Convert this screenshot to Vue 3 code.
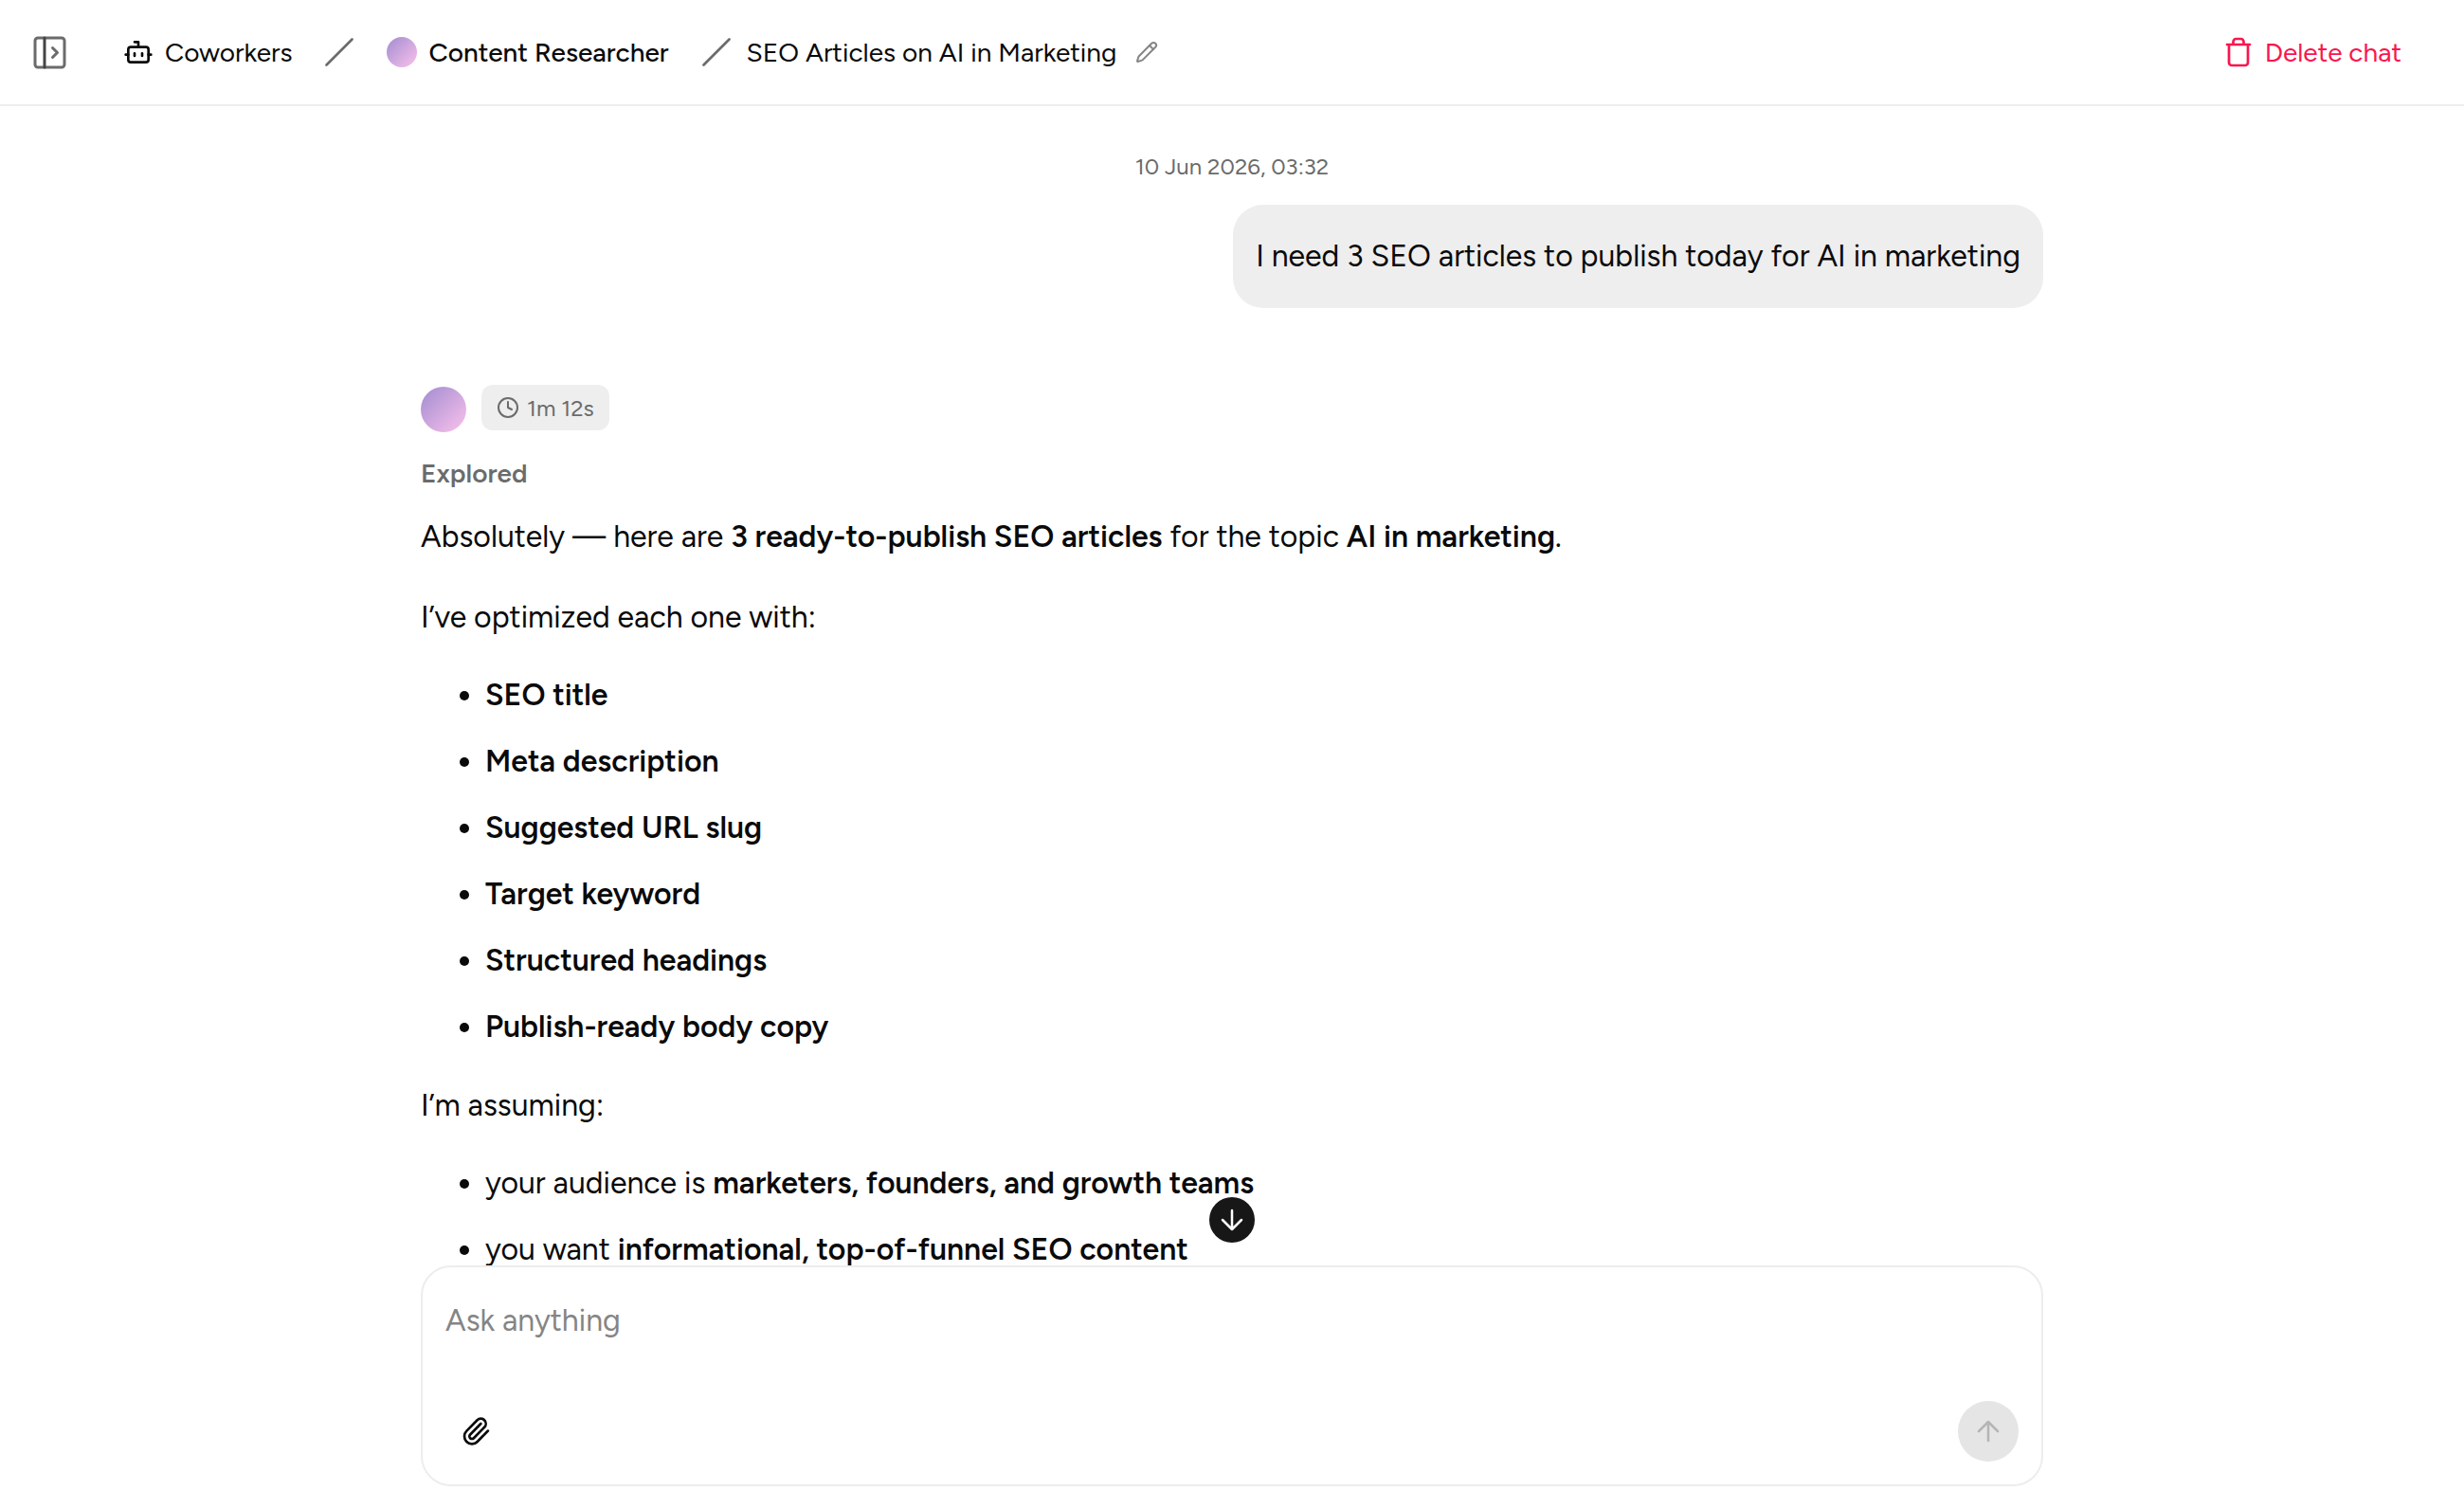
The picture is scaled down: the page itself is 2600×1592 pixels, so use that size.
<script setup>
import { ref } from 'vue'

const message = ref('')

const optimizations = [
  'SEO title',
  'Meta description',
  'Suggested URL slug',
  'Target keyword',
  'Structured headings',
  'Publish-ready body copy'
]

const assumptions = [
  { lead: 'your audience is', strong: 'marketers, founders, and growth teams' },
  { lead: 'you want', strong: 'informational, top-of-funnel SEO content' }
]
</script>

<template>
  <div class="page">

    <!-- HEADER -->
    <header class="topbar">
      <button class="icon-btn sidebar-btn" aria-label="Open sidebar">
        <svg width="36" height="36" viewBox="0 0 36 36" fill="none" stroke="currentColor" stroke-width="3" stroke-linecap="round" stroke-linejoin="round">
          <rect x="3" y="3" width="31" height="31" rx="3" />
          <path class="divider" d="M13 3v31" />
          <path d="M21.500 13.500l5 5-5 5" />
        </svg>
      </button>

      <nav class="crumbs" aria-label="Breadcrumb">
        <a href="#" class="crumb">
          <svg width="32" height="32" viewBox="0 0 24 24" fill="none" stroke="currentColor" stroke-width="2" stroke-linecap="round" stroke-linejoin="round">
            <path d="M12 8V4H9" />
            <rect x="4" y="8" width="16" height="12" rx="2" />
            <path d="M2 14h2M20 14h2M15 13v2M9 13v2" />
          </svg>
          Coworkers
        </a>
        <svg class="slash" width="32" height="32" viewBox="0 0 32 32" fill="none" stroke="currentColor" stroke-width="2.700" stroke-linecap="round">
          <path d="M2.500 29.500l27-27" />
        </svg>
        <a href="#" class="crumb crumb-agent">
          <span class="avatar small"></span>
          Content Researcher
        </a>
        <svg class="slash" width="32" height="32" viewBox="0 0 32 32" fill="none" stroke="currentColor" stroke-width="2.700" stroke-linecap="round">
          <path d="M2.500 29.500l27-27" />
        </svg>
        <span class="crumb">SEO Articles on AI in Marketing</span>
        <button class="icon-btn edit-btn" aria-label="Rename chat">
          <svg width="24" height="24" viewBox="0 0 24 24" fill="none" stroke="currentColor" stroke-width="2" stroke-linecap="round" stroke-linejoin="round">
            <path d="M21.174 6.812a1 1 0 0 0-3.986-3.987L3.842 16.174a2 2 0 0 0-.5.83l-1.321 4.352a.5.5 0 0 0 .623.622l4.353-1.320a2 2 0 0 0 .83-.497z" />
            <path d="M15 5l4 4" />
          </svg>
        </button>
      </nav>

      <button class="delete-btn">
        <svg width="28" height="32" viewBox="0 0 28 32" fill="none" stroke="currentColor" stroke-width="2.700" stroke-linecap="round" stroke-linejoin="round">
          <path d="M2 8h24M4 8v19a3 3 0 0 0 3 3h14a3 3 0 0 0 3-3V8M8.500 8V5a3 3 0 0 1 3-3h5a3 3 0 0 1 3 3v3" />
        </svg>
        Delete chat
      </button>
    </header>

    <!-- CONVERSATION -->
    <main class="chat">
      <div class="thread">
        <time class="date" datetime="2026-06-10T03:32">10 Jun 2026, 03:32</time>
        <div class="bubble">I need 3 SEO articles to publish today for AI in marketing</div>

        <div class="meta">
          <span class="avatar"></span>
          <span class="duration">
            <svg width="24" height="24" viewBox="0 0 24 24" fill="none" stroke="currentColor" stroke-width="2" stroke-linecap="round" stroke-linejoin="round">
              <circle cx="12" cy="12" r="10" />
              <path d="M12 6v6l4 2" />
            </svg>
            1m 12s
          </span>
        </div>

        <div class="status">Explored</div>

        <div class="answer">
          <p>
            Absolutely — here are <strong>3 ready-to-publish SEO articles</strong> for the topic
            <strong>AI in marketing</strong>.
          </p>
          <p>I’ve optimized each one with:</p>
          <ul>
            <li v-for="item in optimizations" :key="item"><strong>{{ item }}</strong></li>
          </ul>
          <p>I’m assuming:</p>
          <ul>
            <li v-for="item in assumptions" :key="item.lead">
              {{ item.lead }} <strong>{{ item.strong }}</strong>
            </li>
          </ul>
        </div>
      </div>
    </main>

    <!-- COMPOSER -->
    <footer class="dock">
      <button class="scroll-btn" aria-label="Scroll to bottom">
        <svg width="24" height="24" viewBox="0 0 24 24" fill="none" stroke="currentColor" stroke-width="2.500" stroke-linecap="round" stroke-linejoin="round">
          <path d="M12 2v20M2 12l10 10 10-10" />
        </svg>
      </button>
      <form class="composer" @submit.prevent>
        <textarea v-model="message" rows="1" placeholder="Ask anything" aria-label="Message"></textarea>
        <div class="composer-actions">
          <button type="button" class="icon-btn attach-btn" aria-label="Attach file">
            <svg width="32" height="32" viewBox="0 0 24 24" fill="none" stroke="currentColor" stroke-width="2" stroke-linecap="round" stroke-linejoin="round">
              <path d="M16 6l-8.414 8.586a2 2 0 0 0 2.829 2.829l8.414-8.586a4 4 0 1 0-5.657-5.657l-8.379 8.551a6 6 0 1 0 8.485 8.485l8.379-8.551" />
            </svg>
          </button>
          <button type="submit" class="send-btn" aria-label="Send">
            <svg width="24" height="24" viewBox="0 0 24 24" fill="none" stroke="currentColor" stroke-width="2.500" stroke-linecap="round" stroke-linejoin="round">
              <path d="M12 22V2M2 12L12 2l10 10" />
            </svg>
          </button>
        </div>
      </form>
    </footer>

  </div>
</template>

<style>
body {
  margin: 0;
  background: #fff;
}
</style>

<style scoped>
.page {
  display: flex;
  flex-direction: column;
  height: 100vh;
  box-sizing: border-box;
  font-family: Figtree, Lato, sans-serif;
  font-size: 32px;
  color: #0a0a0a;
}

button {
  font: inherit;
  border: none;
  padding: 0;
  background: transparent;
  cursor: pointer;
}

svg {
  display: block;
  flex: none;
}

strong {
  font-weight: 600;
}

/* ===========================
   HEADER
=========================== */
.topbar {
  display: flex;
  align-items: center;
  flex: none;
  height: 110px;
  padding: 0 66px 0 34px;
  border-bottom: 2px solid #ededed;
  font-size: 28px;
}

.icon-btn {
  display: flex;
  align-items: center;
  justify-content: center;
  color: #6b6b6b;
}

.divider {
  stroke: #444;
}

.crumbs {
  display: flex;
  align-items: center;
  flex: 1;
  margin-left: 60px;
}

.crumb {
  display: flex;
  align-items: center;
  gap: 12px;
  color: inherit;
  text-decoration: none;
  white-space: nowrap;
}

.crumb-agent {
  font-weight: 500;
}

.slash {
  margin: 0 34px;
  color: #6b6b6b;
}

.slash + span {
  margin-left: -18px;
}

.edit-btn {
  margin-left: 20px;
  color: #858585;
}

.delete-btn {
  display: flex;
  align-items: center;
  gap: 14px;
  color: #f9164e;
}

.avatar {
  flex: none;
  width: 48px;
  height: 48px;
  border-radius: 50%;
  background: linear-gradient(135deg, #a18cd1, #fbc2eb);
}

.avatar.small {
  width: 32px;
  height: 32px;
}

/* ===========================
   CONVERSATION
=========================== */
.chat {
  flex: 1;
  min-height: 0;
  overflow: hidden;
  padding: 0 48px;
}

.thread {
  display: flex;
  flex-direction: column;
  max-width: 1712px;
  margin: 0 auto;
  padding-top: 48px;
}

.date {
  align-self: center;
  font-size: 24px;
  line-height: 32px;
  color: #6b6b6b;
}

.bubble {
  align-self: flex-end;
  margin-top: 24px;
  padding: 24px;
  border-radius: 32px;
  background: #eee;
  line-height: 61px;
}

.meta {
  display: flex;
  align-items: flex-start;
  gap: 16px;
  height: 50px;
  margin-top: 81px;
}

.meta .avatar {
  align-self: flex-end;
}

.duration {
  display: flex;
  align-items: center;
  gap: 8px;
  height: 48px;
  padding: 0 16px;
  border-radius: 12px;
  background: #eee;
  color: #6b6b6b;
  font-size: 24px;
}

.status {
  margin-top: 25px;
  font-size: 28px;
  font-weight: 600;
  line-height: 36px;
  color: #6b6b6b;
}

.answer {
  margin-top: 21px;
  line-height: 57px;
}

.answer p {
  margin: 0 0 28px;
}

.answer ul {
  margin: -3px 0 26px;
  padding-left: 68px;
}

.answer li {
  margin-bottom: 13px;
}

/* ===========================
   COMPOSER
=========================== */
.dock {
  position: relative;
  flex: none;
  padding: 0 48px 24px;
}

.scroll-btn {
  position: absolute;
  top: -72px;
  left: 50%;
  display: flex;
  align-items: center;
  justify-content: center;
  width: 48px;
  height: 48px;
  margin-left: -24px;
  border-radius: 50%;
  background: #171717;
  color: #fff;
}

.composer {
  display: flex;
  flex-direction: column;
  gap: 61px;
  box-sizing: border-box;
  max-width: 1712px;
  margin: 0 auto;
  padding: 32px 24px 24px;
  border: 2px solid #ededed;
  border-radius: 32px;
  background: #fff;
}

.composer textarea {
  display: block;
  height: 48px;
  padding: 0;
  border: none;
  outline: none;
  resize: none;
  overflow: hidden;
  background: transparent;
  font: inherit;
  line-height: 48px;
  color: inherit;
}

.composer textarea::placeholder {
  color: #858585;
  opacity: 1;
}

.composer-actions {
  display: flex;
  align-items: center;
  justify-content: space-between;
}

.attach-btn {
  width: 64px;
  height: 64px;
  color: #0a0a0a;
}

.send-btn {
  display: flex;
  align-items: center;
  justify-content: center;
  width: 64px;
  height: 64px;
  border-radius: 50%;
  background: #e5e5e5;
  color: #b5b5b5;
}
</style>
